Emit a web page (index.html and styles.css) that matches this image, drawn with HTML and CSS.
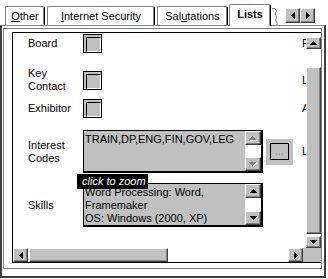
FILE: index.html
```html
<!DOCTYPE html>
<html>
<head>
<meta charset="utf-8">
<link rel="stylesheet" href="styles.css">
</head>
<body>
<div class="window">
  <div class="tabbar">
    <div class="tab t1"><u>O</u>ther</div>
    <div class="tab t2"><u>I</u>nternet Security</div>
    <div class="tab t3">Sal<u>u</u>tations</div>
    <div class="tab active">Lists</div>
    <div class="tab-cut"><svg width="8" height="17" viewBox="0 0 8 17"><path d="M0 0.5 H3 L4.5 3 L3 6 L5 9 L3.5 12 L5 15 V17" fill="none" stroke="#808080" stroke-width="1"/></svg></div>
    <div class="tab-arrows">
      <div class="btn3d tabbtn"><svg width="4" height="7"><rect x="3" y="0" width="1" height="7"/><rect x="2" y="1" width="1" height="5"/><rect x="1" y="2" width="1" height="3"/><rect x="0" y="3" width="1" height="1"/></svg></div>
      <div class="btn3d tabbtn"><svg width="4" height="7"><rect x="0" y="0" width="1" height="7"/><rect x="1" y="1" width="1" height="5"/><rect x="2" y="2" width="1" height="3"/><rect x="3" y="3" width="1" height="1"/></svg></div>
    </div>
  </div>
  <div class="page">
    <div class="panel">
      <div class="frame">
        <div class="view">
          <div class="content">
            <div class="row r1">
              <div class="label">Board</div>
              <div class="check"></div>
              <div class="rlabel">P</div>
            </div>
            <div class="row r2">
              <div class="label">Key<br>Contact</div>
              <div class="check"></div>
              <div class="rlabel">L</div>
            </div>
            <div class="row r3">
              <div class="label">Exhibitor</div>
              <div class="check"></div>
              <div class="rlabel">A</div>
            </div>
            <div class="row r4">
              <div class="label">Interest<br>Codes</div>
              <div class="control">
                <div class="textbox">
                  <div class="tb-text">TRAIN,DP,ENG,FIN,GOV,LEG</div>
                  <div class="tb-scroll">
                    <div class="btn3d mini"><svg width="8" height="5"><g fill="#fff"><rect x="4" y="1" width="1" height="1"/><rect x="3" y="2" width="3" height="1"/><rect x="2" y="3" width="5" height="1"/><rect x="1" y="4" width="7" height="1"/></g><g fill="#808080"><rect x="3" y="0" width="1" height="1"/><rect x="2" y="1" width="3" height="1"/><rect x="1" y="2" width="5" height="1"/><rect x="0" y="3" width="7" height="1"/></g></svg></div>
                    <div class="tb-track"></div>
                    <div class="btn3d mini"><svg width="8" height="5"><g fill="#fff"><rect x="1" y="1" width="7" height="1"/><rect x="2" y="2" width="5" height="1"/><rect x="3" y="3" width="3" height="1"/><rect x="4" y="4" width="1" height="1"/></g><g fill="#808080"><rect x="0" y="0" width="7" height="1"/><rect x="1" y="1" width="5" height="1"/><rect x="2" y="2" width="3" height="1"/><rect x="3" y="3" width="1" height="1"/></g></svg></div>
                  </div>
                </div>
                <div class="dots-btn"><div class="dots-inner">...</div></div>
              </div>
              <div class="rlabel">L</div>
            </div>
            <div class="row r5">
              <div class="label">Skills</div>
              <div class="control">
                <div class="textbox tall">
                  <div class="tb-text">Word Processing: Word,<br>Framemaker<br>OS: Windows (2000, XP)</div>
                  <div class="tb-scroll">
                    <div class="btn3d mini"><svg width="7" height="4"><rect x="3" y="0" width="1" height="1"/><rect x="2" y="1" width="3" height="1"/><rect x="1" y="2" width="5" height="1"/><rect x="0" y="3" width="7" height="1"/></svg></div>
                    <div class="tb-track"></div>
                    <div class="btn3d mini"><svg width="7" height="4"><rect x="0" y="0" width="7" height="1"/><rect x="1" y="1" width="5" height="1"/><rect x="2" y="2" width="3" height="1"/><rect x="3" y="3" width="1" height="1"/></svg></div>
                  </div>
                </div>
              </div>
            </div>
          </div>
          <div class="vscroll">
            <div class="btn3d vbtn"><svg width="7" height="4"><rect x="3" y="0" width="1" height="1"/><rect x="2" y="1" width="3" height="1"/><rect x="1" y="2" width="5" height="1"/><rect x="0" y="3" width="7" height="1"/></svg></div>
            <div class="vtrack"><div class="btn3d vthumb"></div></div>
            <div class="btn3d vbtn"><svg width="7" height="4"><rect x="0" y="0" width="7" height="1"/><rect x="1" y="1" width="5" height="1"/><rect x="2" y="2" width="3" height="1"/><rect x="3" y="3" width="1" height="1"/></svg></div>
          </div>
        </div>
        <div class="hscroll">
          <div class="btn3d hbtn"><svg width="4" height="7"><rect x="3" y="0" width="1" height="7"/><rect x="2" y="1" width="1" height="5"/><rect x="1" y="2" width="1" height="3"/><rect x="0" y="3" width="1" height="1"/></svg></div>
          <div class="htrack"><div class="btn3d hthumb"></div></div>
          <div class="btn3d hbtn"><svg width="4" height="7"><rect x="0" y="0" width="1" height="7"/><rect x="1" y="1" width="1" height="5"/><rect x="2" y="2" width="1" height="3"/><rect x="3" y="3" width="1" height="1"/></svg></div>
          <div class="corner"></div>
        </div>
      </div>
    </div>
  </div>
  <div class="tooltip">click to zoom</div>
</div>
</body>
</html>
```

FILE: styles.css
```css
* { box-sizing: border-box; }
html, body { margin: 0; padding: 0; }
body {
  width: 328px;
  height: 279px;
  overflow: hidden;
  background: #fff;
  font-family: "Liberation Sans", Arial, sans-serif;
  font-size: 11px;
  color: #000;
}
.window {
  position: relative;
  width: 328px;
  height: 279px;
}
u { text-decoration: underline; text-underline-offset: 1px; }

/* tabs */
.tabbar {
  height: 25px;
  display: flex;
  align-items: flex-end;
  padding-left: 5px;
  position: relative;
  z-index: 2;
}
.tab {
  height: 19px;
  border-top: 1px solid #808080;
  border-left: 1px solid #808080;
  border-right: 1px solid #000;
  border-radius: 2px 2px 0 0;
  box-shadow: inset -1px 0 #808080;
  display: flex;
  align-items: center;
  justify-content: center;
  background: #fff;
  line-height: 13px;
}
.t1 { width: 40px; }
.t2 { width: 108px; margin-left: 2px; }
.t3 { width: 71px; margin-left: 2px; }
.tab.active {
  width: 42px;
  height: 22px;
  margin-left: 1px;
  margin-bottom: -1px;
  font-weight: bold;
  padding-bottom: 2px;
}
.tab-cut {
  width: 9px;
  height: 17px;
  margin-left: 1px;
  display: flex;
}
.tab-arrows {
  display: flex;
  align-self: flex-start;
  margin-top: 8px;
  margin-left: 4px;
}
.btn3d {
  background: #c0c0c0;
  border-top: 1px solid #fff;
  border-left: 1px solid #fff;
  border-right: 1px solid #404040;
  border-bottom: 1px solid #404040;
  box-shadow: inset -1px -1px #808080;
  display: flex;
  align-items: center;
  justify-content: center;
}
.btn3d svg { display: block; }
.tabbtn { width: 15px; height: 15px; }

/* page */
.page {
  height: 253px;
  width: 326px;
  border-top: 1px solid #808080;
  border-left: 2px solid #404040;
  border-right: 2px solid #404040;
  border-bottom: 2px solid #404040;
  padding: 2px 0 0 1px;
}
.panel {
  width: 319px;
  height: 241px;
  border: 1px solid #808080;
  padding: 3px 0 0 8px;
}
.frame {
  width: 309px;
  height: 231px;
  border-top: 1px solid #000;
  border-left: 1px solid #000;
  border-bottom: 1px solid #000;
  display: flex;
  flex-direction: column;
}
.view {
  height: 215px;
  display: flex;
}
.content {
  width: 293px;
  overflow: hidden;
  padding: 1px 0 0 15px;
}
.row {
  display: grid;
  grid-template-columns: 55px 219px 4px;
  align-items: center;
  white-space: nowrap;
}
.r1 { height: 19px; }
.r2 { height: 19px; margin-top: 14px; }
.r3 { height: 19px; margin-top: 13px; }
.r4 { height: 43px; margin-top: 12px; }
.r5 { height: 44px; margin-top: 10px; }
.label { line-height: 13px; }
.rlabel { line-height: 13px; overflow: hidden; }

.check {
  width: 19px;
  height: 19px;
  border: 1px solid #000;
  background: #c0c0c0;
  padding: 2px;
}
.check::before {
  content: "";
  display: block;
  width: 13px;
  height: 13px;
  border-top: 1px solid #000;
  border-left: 1px solid #000;
  border-right: 1px solid #fff;
  border-bottom: 1px solid #fff;
}

.control {
  display: flex;
  align-items: center;
}
.textbox {
  width: 180px;
  height: 43px;
  background: #c0c0c0;
  border-top: 1px solid #000;
  border-left: 1px solid #000;
  border-right: 2px solid #000;
  border-bottom: 2px solid #000;
  display: flex;
}
.textbox.tall { height: 44px; }
.tb-text {
  flex: 1;
  padding: 2px 0 0 1px;
  line-height: 13px;
  overflow: hidden;
}
.tb-scroll {
  width: 16px;
  display: flex;
  flex-direction: column;
}
.mini { height: 14px; }
.tb-track { flex: 1; background: #fff; }

.dots-btn {
  width: 27px;
  height: 26px;
  margin-left: 3px;
  background: #c0c0c0;
  padding: 4px 0 0 4px;
}
.dots-inner {
  width: 19px;
  height: 17px;
  border: 1px solid #000;
  color: #808080;
  font-size: 10px;
  line-height: 10px;
  text-align: center;
  padding-top: 3px;
}

/* vertical scrollbar */
.vscroll {
  width: 15px;
  padding-top: 4px;
  display: flex;
  flex-direction: column;
}
.vbtn { height: 12px; }
.vtrack {
  flex: 1;
  background: #fff;
  padding-top: 18px;
}
.vthumb { height: 167px; }

/* horizontal scrollbar */
.hscroll {
  height: 14px;
  display: flex;
}
.hbtn { width: 15px; }
.htrack {
  width: 260px;
  background: #fff;
  padding-left: 1px;
  display: flex;
}
.hthumb { width: 139px; }
.corner { width: 18px; background: #c0c0c0; }

/* tooltip */
.tooltip {
  position: absolute;
  left: 77px;
  top: 174px;
  width: 71px;
  height: 15px;
  background: #000;
  color: #fff;
  font-style: italic;
  line-height: 15px;
  padding-left: 5px;
  white-space: nowrap;
  z-index: 5;
}
```
